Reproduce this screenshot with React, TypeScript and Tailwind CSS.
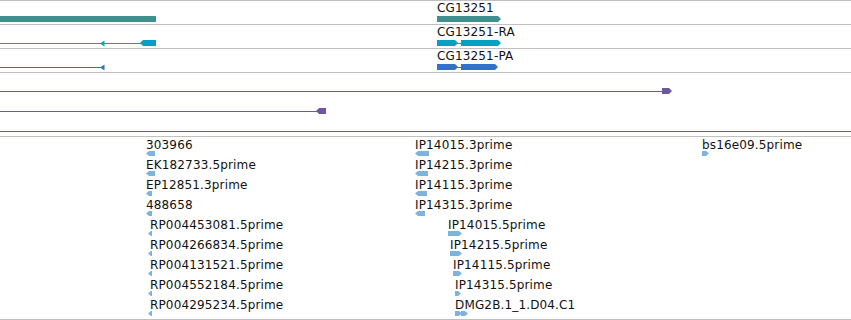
import React from "react";

const TEAL = "#428f8f";
const RA = "#05a0c4";
const PA = "#3370cc";
const PURPLE = "#6f55a5";
const LIGHT = "#7eb4dc";

const leftArrow = (x0: number, x1: number, y: number, h: number, tip = 3) =>
  `${x0},${y + h / 2} ${x0 + tip},${y} ${x1},${y} ${x1},${y + h} ${x0 + tip},${y + h}`;
const rightArrow = (x0: number, x1: number, y: number, h: number, tip = 3) =>
  `${x0},${y} ${x1 - tip},${y} ${x1},${y + h / 2} ${x1 - tip},${y + h} ${x0},${y + h}`;

type Label = { t: string; x: number; base: number };

function Labels({ items, origin }: { items: Label[]; origin: number }) {
  return (
    <>
      {items.map((l, i) => (
        <span
          key={i}
          className="absolute whitespace-nowrap text-[12px] leading-[12px] tracking-[0.15px] text-[#111]"
          style={{ left: l.x, top: l.base - 10 - origin, fontFamily: '"DejaVu Sans", Verdana, sans-serif' }}
        >
          {l.t}
        </span>
      ))}
    </>
  );
}

function Divider() {
  return <div className="h-px w-full bg-[#c0c0c0]" />;
}

function Track({
  origin,
  heightClass,
  labels,
  children,
}: {
  origin: number;
  heightClass: string;
  labels: Label[];
  children: React.ReactNode;
}) {
  return (
    <div className={`relative w-full overflow-hidden ${heightClass}`}>
      <svg className="absolute left-0 top-0 h-full w-full" width={851} height="100%">
        <g transform={`translate(0, ${-origin})`}>{children}</g>
      </svg>
      <Labels items={labels} origin={origin} />
    </div>
  );
}

type Feat = { t: string; x: number; a0: number; a1: number; dir: "L" | "R" | "RR"; k: number };

const feats: Feat[] = [
  { t: "303966", x: 146, a0: 146, a1: 155, dir: "L", k: 0 },
  { t: "EK182733.5prime", x: 146, a0: 146, a1: 155, dir: "L", k: 1 },
  { t: "EP12851.3prime", x: 146, a0: 146, a1: 152, dir: "L", k: 2 },
  { t: "488658", x: 146, a0: 146, a1: 152, dir: "L", k: 3 },
  { t: "RP004453081.5prime", x: 150, a0: 148, a1: 152, dir: "L", k: 4 },
  { t: "RP004266834.5prime", x: 150, a0: 148, a1: 152, dir: "L", k: 5 },
  { t: "RP004131521.5prime", x: 150, a0: 148, a1: 152, dir: "L", k: 6 },
  { t: "RP004552184.5prime", x: 150, a0: 148, a1: 152, dir: "L", k: 7 },
  { t: "RP004295234.5prime", x: 150, a0: 148, a1: 152, dir: "L", k: 8 },
  { t: "IP14015.3prime", x: 415, a0: 415, a1: 429, dir: "L", k: 0 },
  { t: "IP14215.3prime", x: 415, a0: 415, a1: 428, dir: "L", k: 1 },
  { t: "IP14115.3prime", x: 415, a0: 415, a1: 427, dir: "L", k: 2 },
  { t: "IP14315.3prime", x: 415, a0: 415, a1: 425, dir: "L", k: 3 },
  { t: "IP14015.5prime", x: 448, a0: 448, a1: 462, dir: "R", k: 4 },
  { t: "IP14215.5prime", x: 450, a0: 450, a1: 462, dir: "R", k: 5 },
  { t: "IP14115.5prime", x: 453, a0: 453, a1: 462, dir: "R", k: 6 },
  { t: "IP14315.5prime", x: 455, a0: 455, a1: 461, dir: "R", k: 7 },
  { t: "DMG2B.1_1.D04.C1", x: 455, a0: 455, a1: 468, dir: "RR", k: 8 },
  { t: "bs16e09.5prime", x: 702, a0: 702, a1: 709, dir: "R", k: 0 },
];

export default function App() {
  return (
    <div className="flex h-[320px] w-[851px] flex-col overflow-hidden bg-white">
      <Divider />
      <Track origin={1} heightClass="h-[23px]" labels={[{ t: "CG13251", x: 437, base: 12 }]}>
        <rect x={0} y={16} width={156} height={6} fill={TEAL} />
        <polygon points={rightArrow(437, 501, 16, 6)} fill={TEAL} />
      </Track>
      <Divider />
      <Track origin={25} heightClass="h-[23px]" labels={[{ t: "CG13251-RA", x: 437, base: 36 }]}>
        <rect x={0} y={43} width={142} height={1} fill={RA} />
        <polygon points="100,43.5 104.5,40.5 104.5,46.5" fill={RA} />
        <polygon points={leftArrow(140, 156, 40, 6)} fill={RA} />
        <polygon points={rightArrow(437, 458, 40, 6)} fill={RA} />
        <rect x={457} y={43} width={5} height={1} fill={RA} />
        <polygon points={rightArrow(461, 501, 40, 6)} fill={RA} />
      </Track>
      <Divider />
      <Track origin={49} heightClass="h-[23px]" labels={[{ t: "CG13251-PA", x: 437, base: 60 }]}>
        <rect x={0} y={67} width={102} height={1} fill={PA} />
        <polygon points="100,67.5 104.5,64.5 104.5,70.5" fill={PA} />
        <polygon points={rightArrow(437, 458, 64, 6)} fill={PA} />
        <rect x={457} y={67} width={5} height={1} fill={PA} />
        <polygon points={rightArrow(461, 498, 64, 6)} fill={PA} />
      </Track>
      <Divider />
      <Track origin={73} heightClass="h-[63px]" labels={[]}>
        <rect x={0} y={91} width={664} height={1} fill={PURPLE} />
        <polygon points={rightArrow(662, 672, 88, 6)} fill={PURPLE} />
        <rect x={0} y={111} width={318} height={1} fill={PURPLE} />
        <polygon points={leftArrow(316, 326, 108, 6)} fill={PURPLE} />
        <rect x={0} y={131} width={851} height={1} fill={PURPLE} />
      </Track>
      <Divider />
      <Track
        origin={137}
        heightClass="h-[182px]"
        labels={feats.map((f) => ({ t: f.t, x: f.x, base: 149 + 20 * f.k }))}
      >
        {feats.map((f, i) => {
          const y = 151 + 20 * f.k;
          if (f.dir === "L")
            return <polygon key={i} points={leftArrow(f.a0, f.a1, y, 5)} fill={LIGHT} />;
          if (f.dir === "R")
            return <polygon key={i} points={rightArrow(f.a0, f.a1, y, 5)} fill={LIGHT} />;
          return (
            <g key={i}>
              <polygon points={rightArrow(455, 462, y, 5)} fill={LIGHT} />
              <polygon points={rightArrow(461, 468, y, 5)} fill={LIGHT} />
            </g>
          );
        })}
      </Track>
      <Divider />
    </div>
  );
}
